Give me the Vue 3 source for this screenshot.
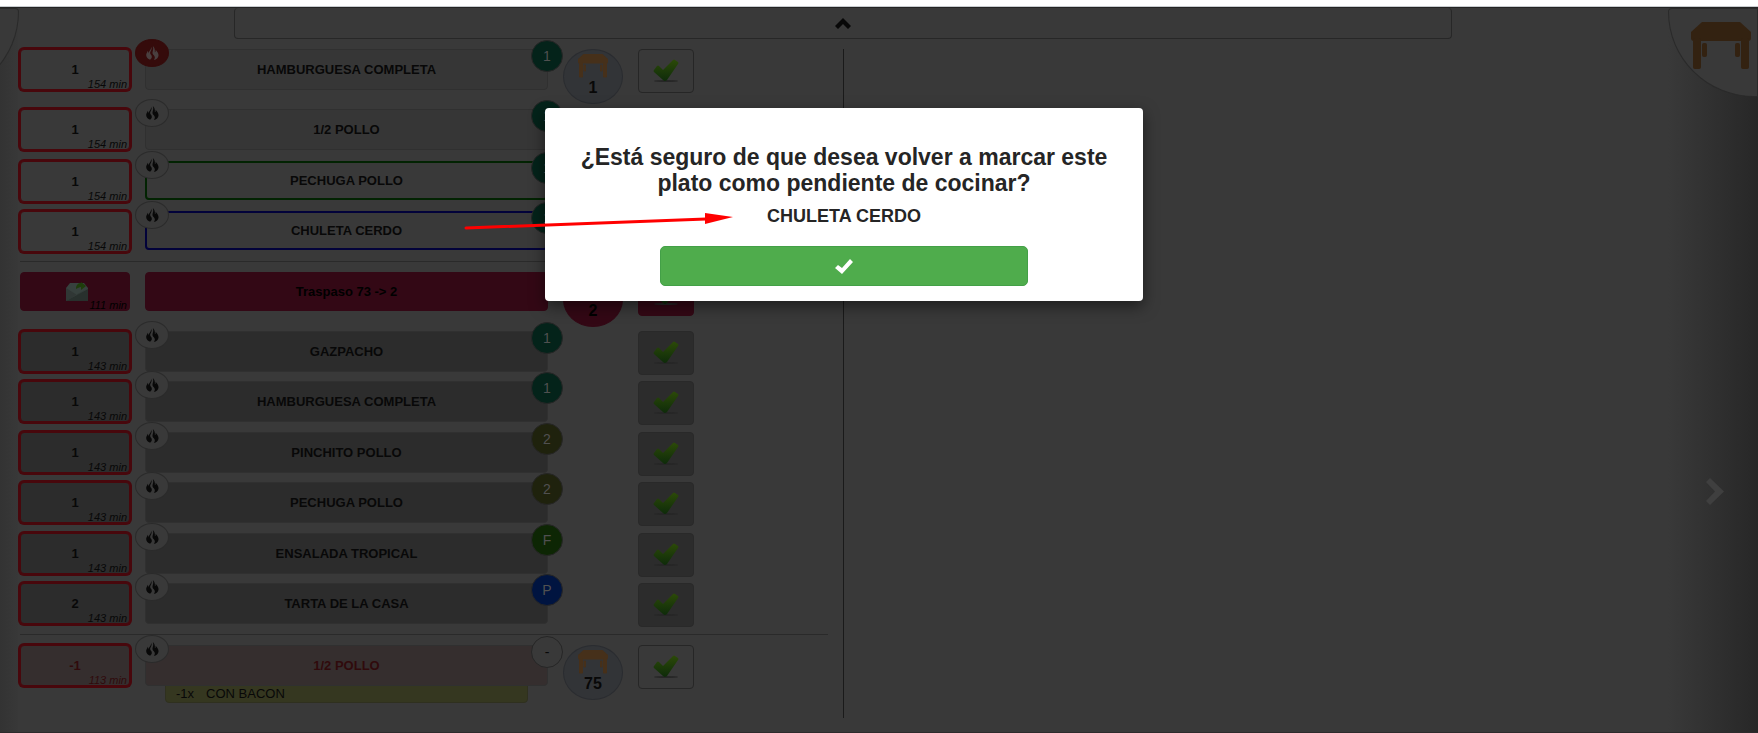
<script setup>
    import { ref } from 'vue'

    const showModal = ref(true)
    const selected = ref('CHULETA CERDO')

    const orders = ref([
        {
            id: 1,
            lines: [
                { qty: '1', min: 154, name: 'HAMBURGUESA COMPLETA', badge: '1', fire: true, table: '1', check: true },
                { qty: '1', min: 154, name: '1/2 POLLO', badge: '1' },
                { qty: '1', min: 154, name: 'PECHUGA POLLO', badge: '1', state: 'green' },
                { qty: '1', min: 154, name: 'CHULETA CERDO', badge: '1', state: 'blue' }
            ]
        },
        {
            id: 2,
            moved: true,
            lines: [
                { qty: '', min: 111, name: 'Traspaso 73 -> 2', state: 'moved', table: '2', check: true },
                { qty: '1', min: 143, name: 'GAZPACHO', badge: '1', state: 'done', check: true },
                { qty: '1', min: 143, name: 'HAMBURGUESA COMPLETA', badge: '1', state: 'done', check: true },
                { qty: '1', min: 143, name: 'PINCHITO POLLO', badge: '2', state: 'done', check: true },
                { qty: '1', min: 143, name: 'PECHUGA POLLO', badge: '2', state: 'done', check: true },
                { qty: '1', min: 143, name: 'ENSALADA TROPICAL', badge: 'F', state: 'done', check: true },
                { qty: '2', min: 143, name: 'TARTA DE LA CASA', badge: 'P', state: 'done', check: true }
            ]
        },
        {
            id: 3,
            lines: [
                { qty: '-1', min: 113, name: '1/2 POLLO', badge: '-', state: 'cancel', table: '75', check: true, note: { qty: '-1x', text: 'CON BACON' } }
            ]
        }
    ])

    const badgeClass = (badge) => {
        return { '1': 'starter', '2': 'main', 'F': 'cold', 'P': 'dessert', '-': 'none' }[badge]
    }

    const askAgain = (line) => {
        selected.value = line.name
        showModal.value = true
    }
</script>
<template>
    <div class="page">
        <svg class="defs" width="0" height="0" aria-hidden="true">
            <defs>
                <linearGradient id="tickFill" x1="0" y1="0" x2="0" y2="1">
                    <stop offset="0" stop-color="#2c4a08" />
                    <stop offset="1" stop-color="#0e2b0a" />
                </linearGradient>
                <symbol id="flame" viewBox="0 0 38 42">
                    <path d="M15 2c4 9-3 13-3 19 0 4 5 6 5 11 0 4-3 6-5 9C5 39 0 34 0 27c0-5 3-8 5-13 2 4 1 6 2 8C8 15 16 10 15 2z" />
                    <path d="M20 0c5 5 7 11 6 19 2-1 3-4 2-8 5 5 10 10 9 18-1 7-6 11-14 13 3-4 4-7 2-11-2-4-7-7-6-12 1-6 4-10 1-19z" />
                </symbol>
                <symbol id="table" viewBox="0 0 60 48">
                    <path d="M11 0h38l11 10v6q0 3-3 3H3q-3 0-3-3v-6z" />
                    <rect x="2" y="16" width="8" height="31" rx="2" />
                    <rect x="50" y="16" width="8" height="31" rx="2" />
                    <rect x="11" y="21" width="5" height="14" rx="2" />
                    <rect x="44" y="21" width="5" height="14" rx="2" />
                </symbol>
                <symbol id="tick" viewBox="0 0 26 24">
                    <ellipse cx="13" cy="22" rx="12" ry="1" fill="#262626" />
                    <path d="M1 11l3-4q1-1 2 0l4 4L20 1q1-1 2 0l3 2q1 1 0 2L14 21q-2 2-4 0L1 13q-1-1 0-2z" fill="url(#tickFill)" />
                </symbol>
            </defs>
        </svg>
        <header class="strip"></header>
        <div class="content">
            <div class="corner left"></div>
            <div class="corner right">
                <svg class="cornertable"><use href="#table" /></svg>
            </div>
            <div class="shade left"></div>
            <button class="shade right" aria-label="Siguiente">
                <svg viewBox="0 0 18 27"><path d="M0 4l4-4 14 13.5L4 27l-4-4 9-9.5z" /></svg>
            </button>

            <div class="topbar">
                <button class="panel" aria-label="Mostrar panel">
                    <svg viewBox="0 0 16 11"><path d="M8 0l8 8-3 3-5-5-5 5-3-3z" /></svg>
                </button>
            </div>

            <main class="columns">
                <div class="board">
                    <template v-for="(order, i) in orders" :key="order.id">
                        <hr v-if="i > 0">
                        <section class="order" :class="{ transfer: order.moved }">
                            <div v-for="(line, n) in order.lines" :key="n" class="line" :class="line.state">
                                <button class="qty">
                                    <svg v-if="line.state == 'moved'" class="mail" viewBox="0 0 22 20">
                                        <path d="M0 6L4 1h14l4 5v13H0z" fill="#37413e" />
                                        <path d="M0 19V6l11 7 11-7z" fill="#303735" />
                                        <path d="M0 19L22 7v12z" fill="#28302d" />
                                        <path d="M10 7c0-5 3-6 5-6V0l5 4-5 4V5c-2 0-3 1-5 2z" fill="#1e3d0b" />
                                    </svg>
                                    <span v-else>{{ line.qty }}</span>
                                    <em>{{ line.min }} min</em>
                                </button>
                                <div class="dishcell">
                                    <button class="dish" @click="askAgain(line)">{{ line.name }}</button>
                                    <button v-if="line.badge" class="fire" :class="{ on: line.fire }" aria-label="Marchar">
                                        <svg><use href="#flame" /></svg>
                                    </button>
                                    <span v-if="line.badge" class="badge" :class="badgeClass(line.badge)">{{ line.badge }}</span>
                                    <div v-if="line.note" class="note">
                                        <span>{{ line.note.qty }}</span>
                                        <span>{{ line.note.text }}</span>
                                    </div>
                                </div>
                                <div class="tablecell">
                                    <button v-if="line.table" class="table">
                                        <svg><use href="#table" /></svg>
                                        <b>{{ line.table }}</b>
                                    </button>
                                </div>
                                <button v-if="line.check" class="check" aria-label="Listo">
                                    <svg><use href="#tick" /></svg>
                                </button>
                            </div>
                        </section>
                    </template>
                </div>
                <div class="board next"></div>
            </main>
        </div>

        <div v-if="showModal" class="overlay">
            <div class="modal" role="dialog" aria-labelledby="question">
                <h3 id="question">¿Está seguro de que desea volver a marcar este plato como pendiente de cocinar?</h3>
                <h4>{{ selected }}</h4>
                <button class="accept" aria-label="Aceptar" @click="showModal = false">
                    <svg viewBox="0 0 18 15"><path d="M0 9l3-3 4 3 8-9 3 3L7 15z" /></svg>
                </button>
            </div>
        </div>

        <!-- pointer over the board and the dialog -->
        <svg class="arrow" viewBox="0 0 270 20" aria-hidden="true">
            <path d="M2 15L242 6" />
            <polygon points="241,0 269,4 241,11" />
        </svg>
    </div>
</template>
<style>
    body{
        background-color: #393939;
    }
</style>
<style scoped>
    .page{
        position: relative;
        display: flex;
        flex-direction: column;
        min-height: 100vh;
        overflow: hidden;
        font-family: "Liberation Sans", Arial, sans-serif;
        font-size: 13px;
        color: #080808;
    }
    .page *{
        box-sizing: border-box;
    }
    button{
        font: inherit;
        color: inherit;
        padding: 0;
        cursor: pointer;
    }
    .defs{
        position: absolute;
    }
    .strip{
        height: 7px;
        background-color: #fff;
        border-bottom: 1px solid #c8cccf;
    }
    .content{
        position: relative;
        flex: 1;
        display: flex;
        flex-direction: column;
        background-color: #393939;
        border-top: 1px solid #242424;
        border-bottom: 1px solid #2d2b2c;
    }
    .corner{
        position: absolute;
        top: 0;
        width: 90px;
        height: 89px;
        border: 1px solid #2a2a2a;
        background-color: #393939;
        z-index: 1;
    }
    .corner.left{
        left: -71px;
        border-radius: 0 4px 100% 0;
    }
    .corner.right{
        right: 0;
        border-radius: 4px 0 0 100%;
    }
    .cornertable{
        position: absolute;
        top: 13px;
        right: 6px;
        width: 60px;
        height: 48px;
        fill: #332211;
    }
    .shade{
        position: absolute;
        top: 0;
        bottom: 0;
        border: 0;
    }
    .shade.left{
        left: 0;
        width: 18px;
        background: linear-gradient(to right, #333333, #383838);
    }
    .shade.right{
        right: 0;
        width: 90px;
        display: flex;
        align-items: flex-start;
        justify-content: center;
        padding: 470px 0 0 4px;
        background: linear-gradient(to right, #393939, #272727);
    }
    .shade.right svg{
        width: 18px;
        height: 27px;
        fill: #3f3f3f;
    }
    .topbar{
        padding: 0 306px 0 234px;
    }
    .panel{
        display: flex;
        align-items: center;
        justify-content: center;
        width: 100%;
        height: 31px;
        border: 1px solid #272727;
        border-top: 0;
        border-radius: 4px;
        background: none;
    }
    .panel svg{
        width: 16px;
        height: 11px;
        fill: #080808;
    }
    .columns{
        flex: 1;
        display: grid;
        grid-template-columns: 1fr 1fr;
        padding: 10px 72px 14px 0;
    }
    .board{
        padding: 0 15px 0 20px;
    }
    .board.next{
        border-left: 1px solid #1a1a1a;
    }
    hr{
        height: 1px;
        margin: 0 0 10px;
        border: 0;
        background-color: #2a2a2a;
    }
    .order{
        display: grid;
        grid-template-rows: 60px;
        grid-auto-rows: 52px 50px 50px;
    }
    .order.transfer{
        grid-template-rows: 59px;
        grid-auto-rows: 50px 51px;
    }
    .line{
        display: grid;
        grid-template-columns: 110fr 403fr 60px 56px 119fr;
        column-gap: 15px;
        align-items: start;
    }
    .qty{
        position: relative;
        height: 41px;
        border: 1px solid #48070c;
        border-radius: 4px;
        box-shadow: 0 0 0 2px #48070c;
        background-color: #393939;
        font-weight: bold;
    }
    .qty em{
        position: absolute;
        right: 2px;
        bottom: -2px;
        font-size: 11px;
        font-weight: normal;
        line-height: 13px;
    }
    .mail{
        width: 22px;
        height: 20px;
        margin-left: 4px;
        vertical-align: middle;
    }
    .dishcell{
        position: relative;
    }
    .dish{
        position: relative;
        display: block;
        width: 100%;
        height: 41px;
        border: 1px solid #303030;
        border-radius: 4px;
        background-color: #363636;
        font-weight: bold;
    }
    .fire{
        position: absolute;
        top: -10px;
        left: -10px;
        display: flex;
        align-items: center;
        justify-content: center;
        width: 34px;
        height: 28px;
        border: 1px solid #2b2b2b;
        border-radius: 50%;
        background-color: #393939;
    }
    .fire svg{
        width: 13px;
        height: 14px;
        fill: #080808;
    }
    .fire.on{
        border-color: #350b0b;
        background-color: #350b0b;
    }
    .fire.on svg{
        fill: #4a4040;
    }
    .badge{
        position: absolute;
        top: -9px;
        right: -15px;
        width: 32px;
        height: 32px;
        line-height: 30px;
        border: 1px solid #262626;
        border-radius: 50%;
        text-align: center;
        font-size: 14px;
        color: #505050;
    }
    .starter{ background-color: #04231a; }
    .main{ background-color: #1f220d; }
    .cold{ background-color: #0d2604; }
    .dessert{ background-color: #001440; }
    .none{
        background-color: #393939;
        color: #080808;
    }
    .note{
        display: flex;
        gap: 12px;
        height: 18px;
        margin: -1px 20px 0;
        padding: 0 10px;
        line-height: 16px;
        border: 1px solid #2f301f;
        border-radius: 0 0 4px 4px;
        background-color: #353720;
    }
    .table{
        display: flex;
        flex-direction: column;
        align-items: center;
        width: 60px;
        height: 55px;
        padding-top: 4px;
        border: 1px solid #2a2c30;
        border-radius: 50%;
        background-color: #323437;
        font-size: 16px;
        line-height: 20px;
    }
    .table svg{
        width: 30px;
        height: 24px;
        fill: #46301a;
    }
    .check{
        display: flex;
        align-items: center;
        justify-content: center;
        height: 44px;
        border: 1px solid #262626;
        border-radius: 4px;
        background-color: #393939;
    }
    .check svg{
        width: 26px;
        height: 24px;
    }
    .done .qty,
    .done .dish,
    .done .check{
        background-color: #2c2c2c;
    }
    .done .check{
        border-color: #292929;
    }
    .green .dish,
    .blue .dish{
        height: 39px;
        border: 2px solid #022302;
        background-color: #393939;
    }
    .blue .dish{
        border-color: #02023a;
    }
    .moved .qty,
    .moved .dish,
    .moved .table,
    .moved .check{
        border-color: #330815;
        background-color: #330815;
        color: #000;
    }
    .moved .table svg{
        fill: #330815;
    }
    .moved .qty{
        height: 39px;
        box-shadow: none;
    }
    .moved .dish{
        height: 39px;
    }
    .cancel .qty,
    .cancel .dish{
        background-color: #352e2e;
        color: #300a0c;
    }
    .overlay{
        position: absolute;
        inset: 0;
        display: flex;
        align-items: flex-start;
        justify-content: center;
        padding: 108px 70px 0 0;
        z-index: 2;
    }
    .modal{
        display: flex;
        flex-direction: column;
        align-items: center;
        width: 598px;
        padding: 36px 24px 15px;
        border-radius: 4px;
        background-color: #fff;
        box-shadow: 0 5px 15px rgba(0,0,0,.5);
        color: #252525;
        text-align: center;
    }
    .modal h3{
        margin: 0;
        font-size: 23px;
        line-height: 26px;
    }
    .modal h4{
        margin: 10px 0 20px;
        font-size: 18px;
        line-height: 20px;
    }
    .accept{
        display: flex;
        align-items: center;
        justify-content: center;
        width: 67%;
        height: 40px;
        border: 1px solid #43a047;
        border-radius: 5px;
        background-color: #4fac4c;
    }
    .accept svg{
        width: 18px;
        height: 15px;
        fill: #fff;
    }
    .arrow{
        position: absolute;
        top: 213px;
        left: 464px;
        width: 270px;
        height: 20px;
        z-index: 3;
        pointer-events: none;
        fill: #f00;
    }
    .arrow path{
        stroke: #f00;
        stroke-width: 3;
        stroke-linecap: round;
    }
</style>
